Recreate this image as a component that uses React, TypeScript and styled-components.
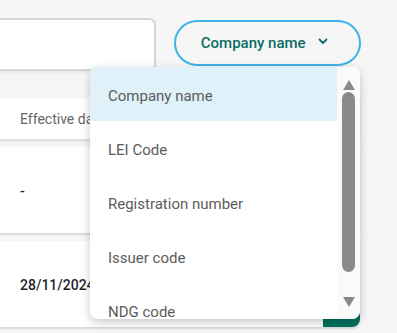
import React from "react";
import styled, { createGlobalStyle } from "styled-components";

const options = [
  "Company name",
  "LEI Code",
  "Registration number",
  "Issuer code",
  "NDG code",
];

const rows = [{ date: "-" }, { date: "28/11/2024" }];

export default function App() {
  return (
    <>
      <GlobalStyle />
      <Page>
        <Toolbar>
          <SearchBox />
          <FilterButton>
            Company name
            <svg width="10" height="7" viewBox="0 0 10 7">
              <path
                d="M1.5 1.5 L5 5 L8.5 1.5"
                fill="none"
                stroke="#0b6e64"
                strokeWidth="1.8"
                strokeLinecap="round"
                strokeLinejoin="round"
              />
            </svg>
          </FilterButton>
        </Toolbar>

        <Table>
          <HeaderRow>
            <HeaderCell>Effective date</HeaderCell>
          </HeaderRow>
          {rows.map((r, i) => (
            <Row key={i}>
              <DateCell>{r.date}</DateCell>
              {i === rows.length - 1 && <ActionCell />}
            </Row>
          ))}
        </Table>

        <Menu>
          <MenuList>
            {options.map((o, i) => (
              <MenuItem key={o} $active={i === 0}>
                {o}
              </MenuItem>
            ))}
          </MenuList>
          <ScrollTrack>
            <ArrowUp />
            <Thumb />
            <ArrowDown />
          </ScrollTrack>
        </Menu>
      </Page>
    </>
  );
}

const GlobalStyle = createGlobalStyle`
  html, body {
    margin: 0;
    padding: 0;
    background: #f6f6f6;
    font-family: Roboto, "Noto Sans", sans-serif;
    overflow: hidden;
  }
`;

const Page = styled.div`
  position: relative;
  width: 397px;
  height: 333px;
  overflow: hidden;
`;

const Toolbar = styled.div`
  display: flex;
  align-items: center;
  gap: 18px;
  margin-left: -30px;
  padding-top: 18px;
  width: 391px;
`;

const SearchBox = styled.div`
  width: 182px;
  height: 49px;
  background: #ffffff;
  border: 2px solid #d6d6d6;
  border-radius: 7px;
  box-shadow: 0 2px 3px rgba(0, 0, 0, 0.06);
`;

const FilterButton = styled.div`
  box-sizing: border-box;
  width: 188px;
  height: 46px;
  margin-top: -4px;
  border: 2px solid #3cb4e6;
  border-radius: 23px;
  display: flex;
  align-items: center;
  justify-content: center;
  gap: 12px;
  padding-right: 6px;
  font-size: 15px;
  font-weight: 500;
  color: #0b6e64;

  svg {
    margin-top: -2px;
  }
`;

const Table = styled.div`
  margin-top: 27px;
  margin-left: -30px;
  width: 390px;
  display: flex;
  flex-direction: column;
  gap: 8px;
`;

const HeaderRow = styled.div`
  height: 41px;
  background: #ffffff;
  box-shadow: 0 2px 2px rgba(0, 0, 0, 0.12);
  display: flex;
  align-items: center;
  padding-left: 50px;
`;

const HeaderCell = styled.div`
  font-size: 14px;
  color: #666666;
`;

const Row = styled.div`
  height: 86px;
  background: #ffffff;
  box-shadow: 0 2px 2px rgba(0, 0, 0, 0.12);
  display: flex;
  align-items: center;
  justify-content: space-between;
  padding-left: 50px;
  border-bottom-right-radius: 8px;
`;

const DateCell = styled.div`
  font-size: 14px;
  font-weight: 500;
  color: #1f1f2e;
  margin-top: 1px;
`;

const ActionCell = styled.div`
  align-self: stretch;
  width: 37px;
  background: #00705e;
  border-bottom-right-radius: 8px;
`;

const Menu = styled.div`
  position: absolute;
  left: 90px;
  top: 67px;
  width: 270px;
  height: 252px;
  display: flex;
  background: #ffffff;
  border-radius: 8px;
  overflow: hidden;
  box-shadow: 0 3px 10px rgba(0, 0, 0, 0.22);
`;

const MenuList = styled.div`
  flex: 1;
  display: flex;
  flex-direction: column;
`;

const MenuItem = styled.div<{ $active: boolean }>`
  flex: 0 0 54px;
  box-sizing: border-box;
  display: flex;
  align-items: center;
  padding: 3px 0 0 18px;
  font-size: 15px;
  color: #5c5c5c;
  background: ${(p) => (p.$active ? "#dff1f9" : "transparent")};
`;

const ScrollTrack = styled.div`
  width: 23px;
  background: #fafafa;
  display: flex;
  flex-direction: column;
  align-items: center;
  padding-top: 13px;
`;

const ArrowUp = styled.div`
  width: 0;
  height: 0;
  border-left: 6.5px solid transparent;
  border-right: 6.5px solid transparent;
  border-bottom: 10px solid #8a8a8a;
`;

const Thumb = styled.div`
  width: 13px;
  height: 180px;
  margin-top: 2px;
  border-radius: 7px;
  background: #8a8a8a;
`;

const ArrowDown = styled.div`
  width: 0;
  height: 0;
  margin-top: 25px;
  border-left: 6.5px solid transparent;
  border-right: 6.5px solid transparent;
  border-top: 10px solid #8a8a8a;
`;
